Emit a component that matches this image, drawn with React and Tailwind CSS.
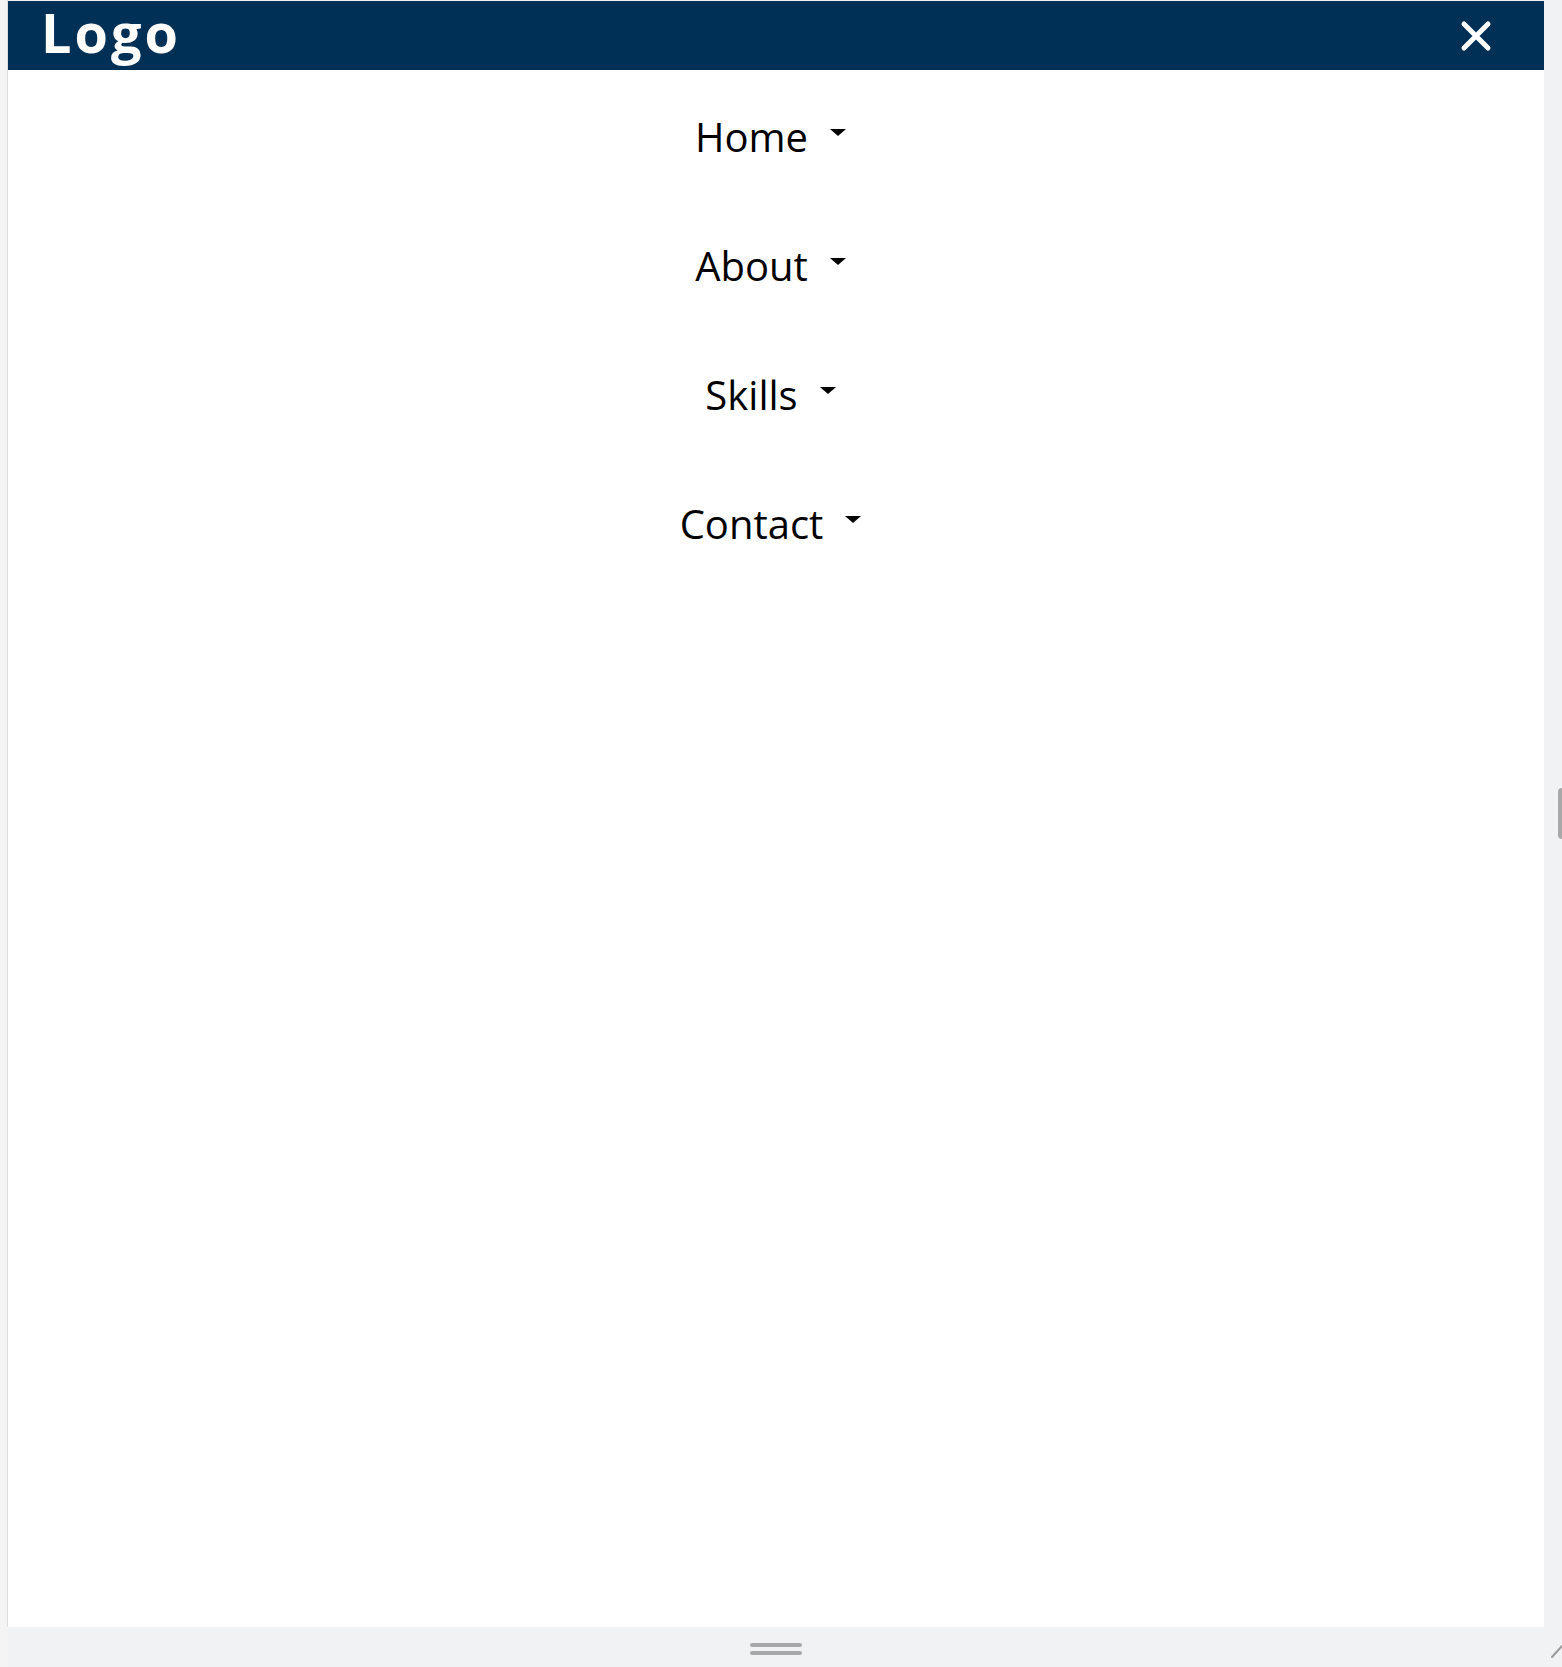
import React from "react"

const navItems = ["Home", "About", "Skills", "Contact"]

const Caret = () => (
  <span className="ml-[22px] mt-[12px] self-start h-0 w-0 border-x-[8px] border-t-[7px] border-x-transparent border-t-black" />
)

const CloseIcon = () => (
  <svg width="32" height="32" viewBox="0 0 32 32" className="mt-[19px] shrink-0">
    <path d="M4 4 L28 28 M28 4 L4 28" stroke="#ffffff" strokeWidth="5" strokeLinecap="round" fill="none" />
  </svg>
)

export default function App() {
  return (
    <div
      className="flex h-[1667px] w-full flex-col bg-[#f1f2f4]"
      style={{ fontFamily: '"Open Sans", "Noto Sans", sans-serif' }}
    >
      {/* Preview frame */}
      <div className="flex min-h-0 flex-1">
        <div className="w-[7px] bg-[#f3f4f3]" />
        <div className="w-px bg-[#dcdddd]" />
        <div className="mt-px flex flex-1 flex-col bg-white">
          {/* Header */}
          <header className="flex h-[69px] items-start justify-between bg-[#003056] pl-[33px] pr-[52px]">
            <span className="text-[54px] font-bold leading-[62px] tracking-[3px] text-white">Logo</span>
            <CloseIcon />
          </header>

          {/* Mobile nav */}
          <nav className="flex flex-col items-center gap-[89px] pr-[11px] pt-[47px]">
            {navItems.map((item) => (
              <a key={item} href="#" className="flex items-center text-[40px] leading-[40px] text-black">
                <span>{item}</span>
                <Caret />
              </a>
            ))}
          </nav>
        </div>
        <div className="flex w-[18px] items-center justify-end">
          <div className="h-[51px] w-[4px] rounded-l-full bg-[#a8a8a8]" />
        </div>
      </div>

      {/* Bottom resize bar */}
      <div className="flex h-[40px]">
        <div className="w-[8px] bg-[#f3f4f3]" />
        <div className="flex flex-1 flex-col items-center gap-[4px] pt-[16px]">
          <div className="h-[4px] w-[52px] rounded-full bg-[#a8a8a8]" />
          <div className="h-[4px] w-[52px] rounded-full bg-[#a8a8a8]" />
        </div>
        <div className="relative w-[18px]">
          <svg width="12" height="14" viewBox="0 0 12 14" className="absolute right-0 top-[18px]">
            <path d="M2 12 L12 1" stroke="#9a9a9a" strokeWidth="2" strokeLinecap="round" />
          </svg>
        </div>
      </div>
    </div>
  )
}
